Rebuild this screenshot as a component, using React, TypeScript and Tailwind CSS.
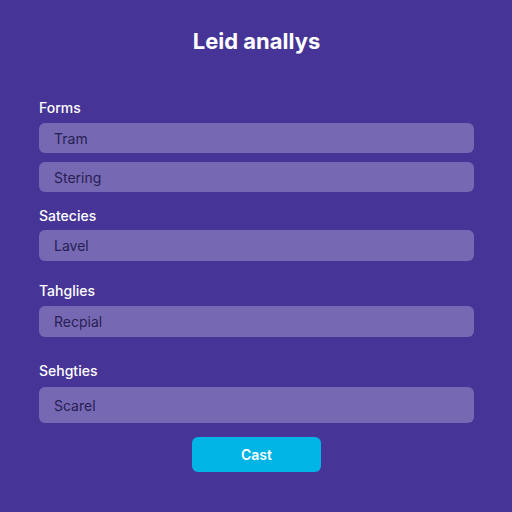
import React from 'react';

type Section = {
    label: string;
    fields: string[];
    gapTop: string;
    gapLabel: string;
    height: string;
};

const sections: Section[] = [
    { label: 'Forms', fields: ['Tram', 'Stering'], gapTop: 'mt-[43px]', gapLabel: 'mb-[5px]', height: 'h-[30px]' },
    { label: 'Satecies', fields: ['Lavel'], gapTop: 'mt-[14px]', gapLabel: 'mb-[4px]', height: 'h-[31px]' },
    { label: 'Tahglies', fields: ['Recpial'], gapTop: 'mt-[20px]', gapLabel: 'mb-[5px]', height: 'h-[31px]' },
    { label: 'Sehgties', fields: ['Scarel'], gapTop: 'mt-[24px]', gapLabel: 'mb-[6px]', height: 'h-[36px]' },
];

function Field({ value, height }: { value: string; height: string }) {
    return (
        <input
            readOnly
            defaultValue={value}
            className={`w-full ${height} rounded-[6px] bg-[#7768b4] px-[15px] text-[14px] text-[#261f52] outline-none`}
        />
    );
}

export default function App() {
    return (
        <div
            className="w-[512px] h-[512px] bg-[#463496] pl-[39px] pr-[38px] pt-[27px] flex flex-col"
            style={{ fontFamily: 'Inter, "Liberation Sans", sans-serif' }}
        >
            <h1 className="text-center text-[22px] leading-[28px] font-bold text-white">Leid anallys</h1>

            {sections.map(s => (
                <div key={s.label} className={`${s.gapTop} flex flex-col`}>
                    <label className={`text-[14px] leading-[20px] font-medium text-white ${s.gapLabel}`}>
                        {s.label}
                    </label>
                    <div className="flex flex-col gap-[9px]">
                        {s.fields.map(f => (
                            <Field key={f} value={f} height={s.height} />
                        ))}
                    </div>
                </div>
            ))}

            <div className="mt-[14px] flex justify-center">
                <button className="w-[129px] h-[35px] rounded-[6px] bg-[#00b4e6] text-[14px] font-semibold text-white">
                    Cast
                </button>
            </div>
        </div>
    );
}
